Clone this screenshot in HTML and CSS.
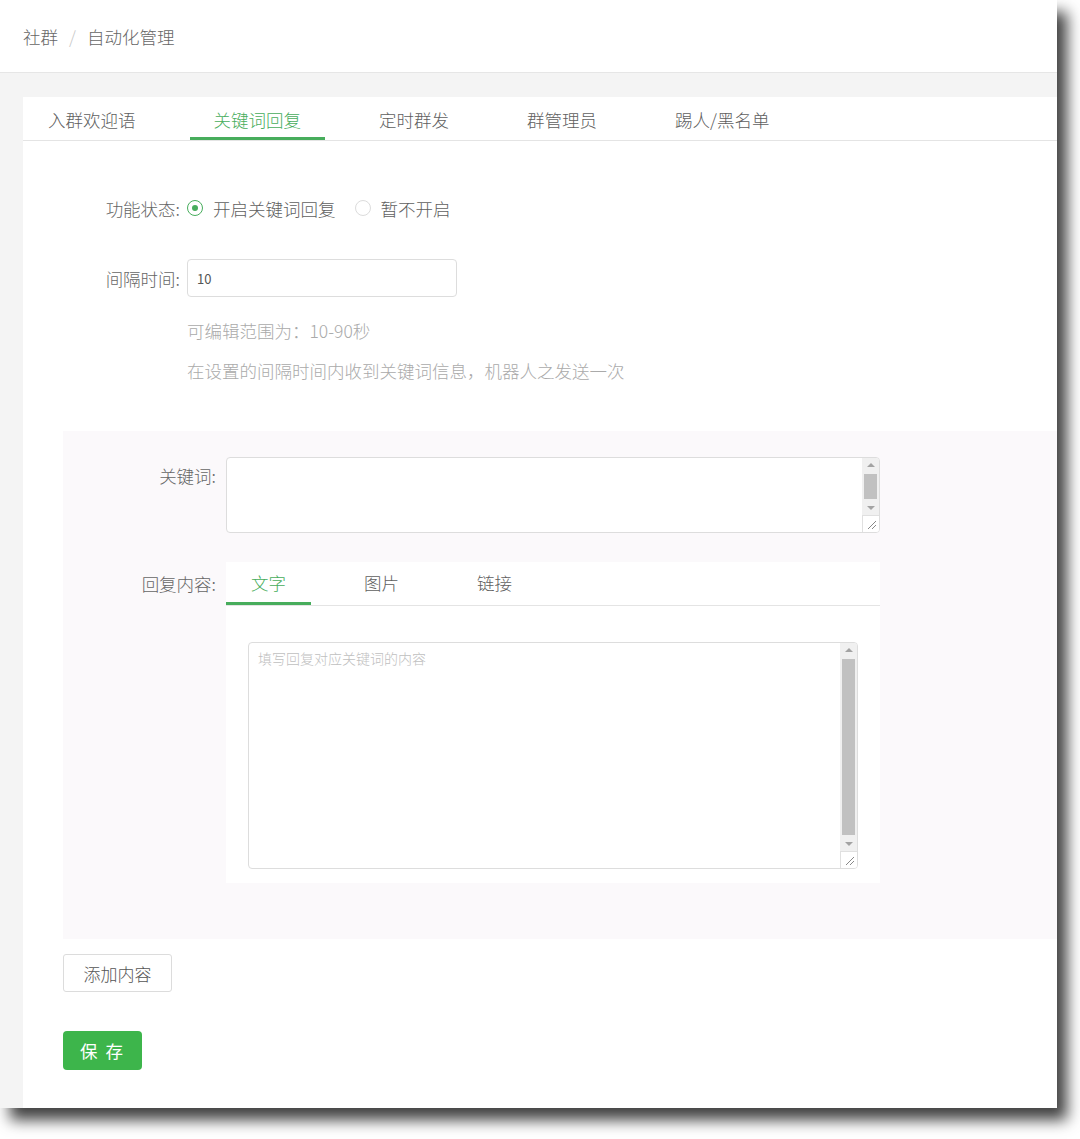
FILE: index.html
```html
<!DOCTYPE html>
<html lang="zh-CN">
<head>
    <meta charset="UTF-8">
    <meta name="viewport" content="width=device-width, initial-scale=1.0">
    <title>自动化管理</title>
    <link rel="stylesheet" href="styles.css">
</head>
<body>
    <div class="frame">
        <div class="header">
            <span class="crumb">社群</span>
            <span class="crumb-sep">/</span>
            <span class="crumb">自动化管理</span>
        </div>

        <div class="main">
            <div class="card">
                <div class="tabs">
                    <a class="tab">入群欢迎语</a>
                    <a class="tab active">关键词回复</a>
                    <a class="tab">定时群发</a>
                    <a class="tab">群管理员</a>
                    <a class="tab">踢人/黑名单</a>
                </div>

                <div class="form">
                    <div class="form-row">
                        <label class="form-label">功能状态:</label>
                        <div class="radios">
                            <span class="radio checked"><i></i>开启关键词回复</span>
                            <span class="radio"><i></i>暂不开启</span>
                        </div>
                    </div>

                    <div class="form-row row-interval">
                        <label class="form-label">间隔时间:</label>
                        <input class="text-input" type="text" value="10">
                    </div>

                    <div class="hints">
                        <p>可编辑范围为：10-90秒</p>
                        <p>在设置的间隔时间内收到关键词信息，机器人之发送一次</p>
                    </div>
                </div>

                <div class="rule-box">
                    <div class="rule-row">
                        <label class="rule-label">关键词:</label>
                        <div class="area area-kw">
                            <textarea class="area-input"></textarea>
                            <div class="vscroll">
                                <span class="arrow up"></span>
                                <span class="thumb"></span>
                                <span class="arrow down"></span>
                                <span class="grip"><svg width="16" height="16" viewBox="0 0 16 16"><path d="M13 5 L5 13 M13 9 L9 13" stroke="#888" stroke-width="1" fill="none"/></svg></span>
                            </div>
                        </div>
                    </div>

                    <div class="rule-row row-reply">
                        <label class="rule-label label-reply">回复内容:</label>
                        <div class="reply-panel">
                            <div class="reply-tabs">
                                <a class="reply-tab active">文字</a>
                                <a class="reply-tab">图片</a>
                                <a class="reply-tab">链接</a>
                            </div>
                            <div class="area area-reply">
                                <textarea class="area-input" placeholder="填写回复对应关键词的内容"></textarea>
                                <div class="vscroll">
                                    <span class="arrow up"></span>
                                    <span class="thumb"></span>
                                    <span class="arrow down"></span>
                                    <span class="grip"><svg width="16" height="16" viewBox="0 0 16 16"><path d="M13 5 L5 13 M13 9 L9 13" stroke="#888" stroke-width="1" fill="none"/></svg></span>
                                </div>
                            </div>
                        </div>
                    </div>
                </div>

                <div class="actions">
                    <button class="btn-add">添加内容</button>
                    <button class="btn-save">保 存</button>
                </div>
            </div>
        </div>
    </div>
</body>
</html>
```

FILE: styles.css
```css
* {
    margin: 0;
    padding: 0;
    box-sizing: border-box;
}

html {
    background: #fff;
}

body {
    font-family: "Noto Sans CJK SC", "Noto Sans", sans-serif;
    font-weight: 300;
    background: #fff;
    color: #606060;
    min-height: 1139px;
    padding-bottom: 31px;
}

.frame {
    width: 1057px;
    height: 1108px;
    background: #f4f4f4;
    box-shadow: 10px 12px 14px rgba(0, 0, 0, 0.75);
    display: flex;
    flex-direction: column;
}

.header {
    height: 73px;
    flex-shrink: 0;
    background: #fff;
    border-bottom: 1px solid #e6e6e6;
    display: flex;
    align-items: center;
    padding-left: 23px;
    font-size: 17.5px;
    color: #666;
}

.crumb-sep {
    color: #c8c8c8;
    margin: 0 11px;
}

.main {
    flex: 1;
    padding: 24px 0 0 23px;
    display: flex;
}

.card {
    flex: 1;
    background: #fff;
}

.tabs {
    display: flex;
    gap: 30px;
    padding-left: 1px;
    border-bottom: 1px solid #e4e4e4;
    height: 44px;
}

.tab {
    padding: 2px 24px 0;
    font-size: 17.5px;
    line-height: 41px;
    color: #606060;
    border-bottom: 3px solid transparent;
}

.tab.active {
    color: #47ad5c;
    border-bottom-color: #47ad5c;
}

.form {
    padding-top: 48px;
}

.form-row {
    display: flex;
    align-items: center;
    height: 38px;
}

.row-interval {
    margin-top: 32px;
}

.form-label {
    width: 157px;
    margin-right: 7px;
    text-align: right;
    font-size: 17.5px;
    color: #666;
}

.radios {
    display: flex;
    align-items: center;
    gap: 19px;
    font-size: 17.5px;
    color: #606060;
}

.radio {
    display: flex;
    align-items: center;
    gap: 10px;
}

.radio i {
    width: 16px;
    height: 16px;
    border-radius: 50%;
    border: 1px solid #dcdcdc;
    display: flex;
    align-items: center;
    justify-content: center;
}

.radio.checked i {
    border-color: #47ad5c;
}

.radio.checked i::after {
    content: "";
    width: 6px;
    height: 6px;
    border-radius: 50%;
    background: #47ad5c;
}

.text-input {
    width: 270px;
    height: 38px;
    border: 1px solid #ddd;
    border-radius: 4px;
    padding: 0 9px;
    font-family: inherit;
    font-size: 13px;
    color: #555;
}

.hints {
    margin-left: 164px;
    margin-top: 14px;
    font-size: 17.5px;
    line-height: 40px;
    color: #aaa;
}

.rule-box {
    margin: 40px 0 0 40px;
    background: #fbf9fb;
    padding: 26px 0 56px;
}

.rule-row {
    display: flex;
    align-items: flex-start;
}

.row-reply {
    margin-top: 29px;
}

.rule-label {
    width: 153px;
    margin-right: 10px;
    text-align: right;
    font-size: 17.5px;
    line-height: 38px;
    color: #666;
}

.label-reply {
    line-height: 44px;
}

.area {
    display: flex;
    border: 1px solid #ddd;
    border-radius: 4px;
    background: #fff;
    overflow: hidden;
}

.area-input {
    flex: 1;
    border: none;
    resize: none;
    outline: none;
    background: transparent;
    font-family: inherit;
    font-weight: 300;
    font-size: 14px;
    padding: 5px 9px;
    color: #555;
}

.area-input::placeholder {
    color: #c0c0c0;
}

.area-kw {
    width: 654px;
    height: 76px;
}

.vscroll {
    width: 17px;
    display: flex;
    flex-direction: column;
    align-items: center;
    background: #f0f0f0;
}

.arrow {
    height: 14px;
    width: 100%;
    display: flex;
    align-items: center;
    justify-content: center;
}

.arrow::after {
    content: "";
    border-left: 4px solid transparent;
    border-right: 4px solid transparent;
}

.arrow.up::after {
    border-bottom: 4px solid #a3a3a3;
}

.arrow.down::after {
    border-top: 4px solid #a3a3a3;
}

.thumb {
    flex: 1;
    width: 13px;
    margin: 2px 0;
    background: #c1c1c1;
}

.grip {
    width: 17px;
    height: 17px;
    background: #fff;
    border-top: 1px solid #e0e0e0;
    border-left: 1px solid #e0e0e0;
    display: flex;
}

.reply-panel {
    width: 654px;
    background: #fff;
    padding-bottom: 14px;
}

.reply-tabs {
    display: flex;
    gap: 28px;
    height: 44px;
    border-bottom: 1px solid #e4e4e4;
}

.reply-tab {
    padding: 0 25px;
    font-size: 17.5px;
    line-height: 41px;
    color: #606060;
    border-bottom: 3px solid transparent;
}

.reply-tab.active {
    color: #47ad5c;
    border-bottom-color: #47ad5c;
}

.area-reply {
    margin: 36px 22px 0;
    height: 227px;
}

.actions {
    margin-left: 40px;
    padding-top: 15px;
    display: flex;
    flex-direction: column;
    align-items: flex-start;
    gap: 39px;
}

.btn-add {
    width: 109px;
    height: 38px;
    background: #fff;
    border: 1px solid #dcdcdc;
    border-radius: 3px;
    font-family: inherit;
    font-weight: 300;
    font-size: 17px;
    color: #555;
}

.btn-save {
    width: 79px;
    height: 39px;
    background: #3db54b;
    border: none;
    border-radius: 4px;
    font-family: inherit;
    font-size: 17.5px;
    color: #fff;
    letter-spacing: 2px;
}
```
